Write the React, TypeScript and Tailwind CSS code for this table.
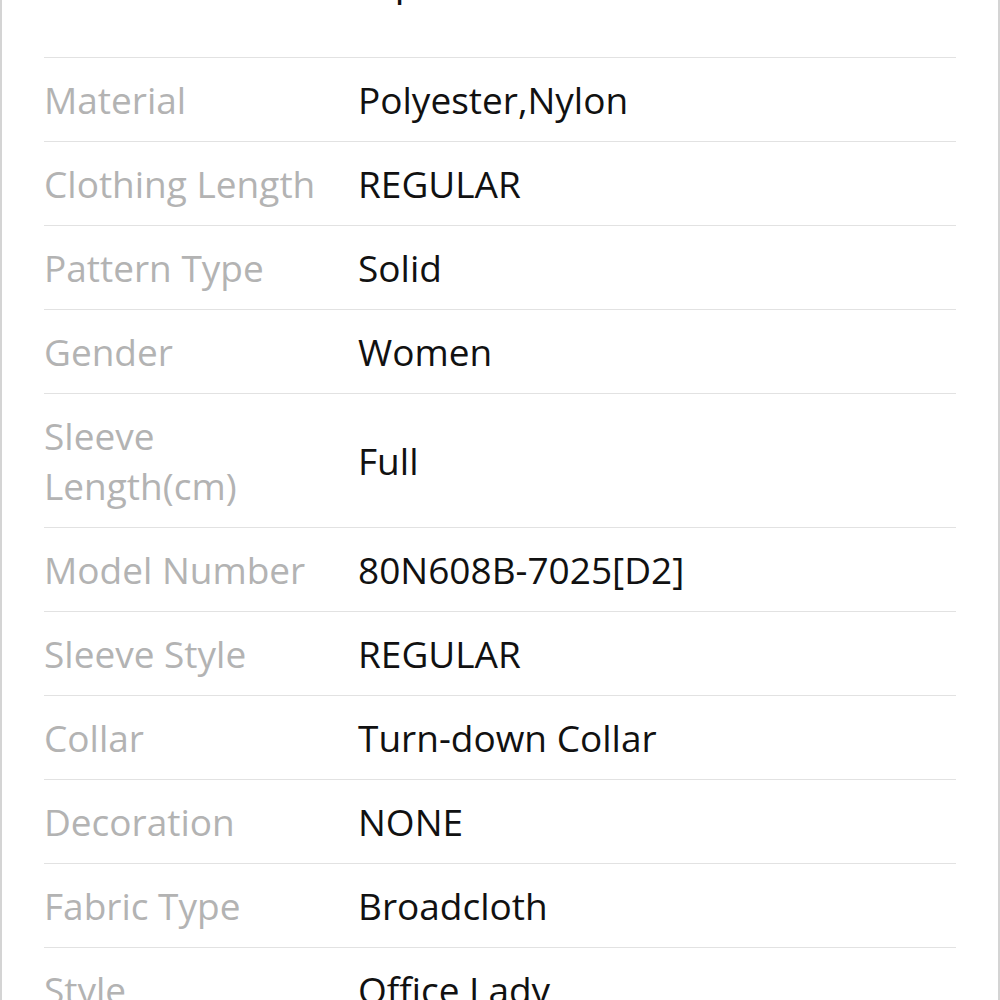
const specs: [string, string][] = [
  ['Material', 'Polyester,Nylon'],
  ['Clothing Length', 'REGULAR'],
  ['Pattern Type', 'Solid'],
  ['Gender', 'Women'],
  ['Sleeve Length(cm)', 'Full'],
  ['Model Number', '80N608B-7025[D2]'],
  ['Sleeve Style', 'REGULAR'],
  ['Collar', 'Turn-down Collar'],
  ['Decoration', 'NONE'],
  ['Fabric Type', 'Broadcloth'],
  ['Style', 'Office Lady'],
  ['Season', 'Spring/Autumn'],
]

export default function App() {
  return (
    <div className="h-[1000px] overflow-hidden bg-white" style={{ fontFamily: '"Open Sans", sans-serif' }}>
      <div className="border-x-2 border-[#d4d4d4] px-[42px] -mt-[48px]">
        <h2 className="h-[105px] text-center text-[40px] leading-[56px] text-[#111]">Specifications</h2>
        <div className="border-t border-[#e2e2e2]">
          {specs.map(([label, value]) => (
            <div key={label} className="flex items-center border-b border-[#e2e2e2] py-[16.5px] text-[37px] leading-[50px]">
              <div className="w-[314px] shrink-0 pr-[14px] text-[#b3b3b3]">{label}</div>
              <div className="flex-1 text-[#111]">{value}</div>
            </div>
          ))}
        </div>
      </div>
    </div>
  )
}
